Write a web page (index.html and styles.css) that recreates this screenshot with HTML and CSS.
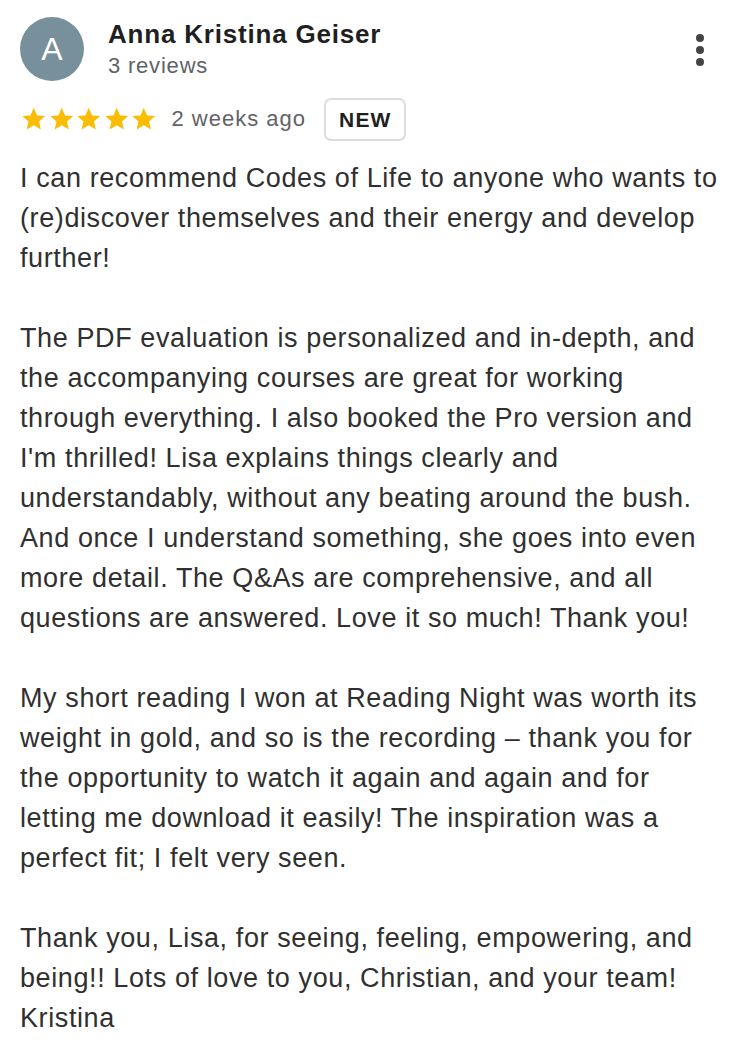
FILE: index.html
```html
<!DOCTYPE html>
<html>
<head>
<meta charset="utf-8">
<link rel="stylesheet" href="styles.css">
</head>
<body>
<div class="review">
  <div class="header">
    <div class="avatar">A</div>
    <div class="who">
      <div class="name">Anna Kristina Geiser</div>
      <div class="count">3 reviews</div>
    </div>
    <div class="menu"><span></span><span></span><span></span></div>
  </div>
  <div class="meta">
    <div class="stars">
      <svg viewBox="0 0 24 24"><path d="M12 2.5l2.9 6.6 7.1.6-5.4 4.7 1.6 7-6.2-3.7-6.2 3.7 1.6-7L2 9.7l7.1-.6z"/></svg>
      <svg viewBox="0 0 24 24"><path d="M12 2.5l2.9 6.6 7.1.6-5.4 4.7 1.6 7-6.2-3.7-6.2 3.7 1.6-7L2 9.7l7.1-.6z"/></svg>
      <svg viewBox="0 0 24 24"><path d="M12 2.5l2.9 6.6 7.1.6-5.4 4.7 1.6 7-6.2-3.7-6.2 3.7 1.6-7L2 9.7l7.1-.6z"/></svg>
      <svg viewBox="0 0 24 24"><path d="M12 2.5l2.9 6.6 7.1.6-5.4 4.7 1.6 7-6.2-3.7-6.2 3.7 1.6-7L2 9.7l7.1-.6z"/></svg>
      <svg viewBox="0 0 24 24"><path d="M12 2.5l2.9 6.6 7.1.6-5.4 4.7 1.6 7-6.2-3.7-6.2 3.7 1.6-7L2 9.7l7.1-.6z"/></svg>
    </div>
    <span class="when">2 weeks ago</span>
    <span class="badge">NEW</span>
  </div>
  <div class="text">
    <p>I can recommend Codes of Life to anyone who wants to (re)discover themselves and their energy and develop further!</p>
    <p>The PDF evaluation is personalized and in-depth, and the accompanying courses are great for working through everything. I also booked the Pro version and I'm thrilled! Lisa explains things clearly and understandably, without any beating around the bush. And once I understand something, she goes into even more detail. The Q&amp;As are comprehensive, and all questions are answered. Love it so much! Thank you!</p>
    <p>My short reading I won at Reading Night was worth its weight in gold, and so is the recording – thank you for the opportunity to watch it again and again and for letting me download it easily! The inspiration was a perfect fit; I felt very seen.</p>
    <p>Thank you, Lisa, for seeing, feeling, empowering, and being!! Lots of love to you, Christian, and your team!<br>Kristina</p>
  </div>
</div>
</body>
</html>
```

FILE: styles.css
```css
html, body {
  margin: 0;
  padding: 0;
  background: #fff;
}
body {
  font-family: "Liberation Sans", Arial, sans-serif;
  color: #222;
}
.review {
  padding: 17px 20px 0 20px;
}
.header {
  display: flex;
  align-items: flex-start;
}
.avatar {
  width: 64px;
  height: 64px;
  border-radius: 50%;
  background: #78909c;
  color: #fff;
  font-size: 32px;
  line-height: 64px;
  text-align: center;
  flex: none;
}
.who {
  margin-left: 24px;
  flex: 1;
}
.name {
  font-weight: bold;
  font-size: 26px;
  letter-spacing: 0.8px;
  line-height: 34px;
  color: #1f1f1f;
}
.count {
  font-size: 22px;
  letter-spacing: 0.8px;
  line-height: 30px;
  color: #5f6368;
}
.menu {
  display: flex;
  flex-direction: column;
  gap: 4px;
  margin: 17px 20px 0 0;
}
.menu span {
  width: 8px;
  height: 8px;
  border-radius: 50%;
  background: #444;
}
.meta {
  display: flex;
  align-items: center;
  margin-top: 16px;
  height: 44px;
}
.stars {
  display: flex;
}
.stars svg {
  width: 27.5px;
  height: 27.5px;
  fill: #fbbc04;
}
.when {
  font-size: 22px;
  letter-spacing: 1px;
  color: #5f6368;
  margin-left: 14px;
}
.badge {
  margin-left: 18px;
  border: 2px solid #dadce0;
  border-radius: 7px;
  font-weight: bold;
  font-size: 21px;
  letter-spacing: 1.2px;
  line-height: 39px;
  padding: 0 12px 0 13px;
  color: #1f1f1f;
}
.text {
  margin-top: 17px;
  font-size: 27px;
  letter-spacing: 0.6px;
  line-height: 40px;
  color: #303030;
}
.text p {
  margin: 0 0 40px 0;
}
```
